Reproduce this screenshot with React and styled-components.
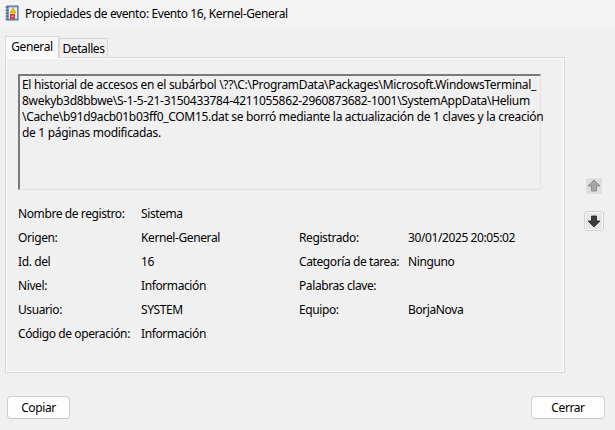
import React from 'react';
import styled, { createGlobalStyle } from 'styled-components';

const Global = createGlobalStyle`
    html, body {
        margin: 0;
        padding: 0;
        background: #f0f0f0;
    }
    body {
        font-family: 'Noto Sans', 'Liberation Sans', sans-serif;
        font-size: 12px;
        letter-spacing: -0.4px;
        color: #000;
    }
`

const Window = styled.div`
    width: 615px;
    height: 430px;
    display: flex;
    flex-direction: column;
    background: #f0f0f0;
    overflow: hidden;
`

const TitleBar = styled.div`
    height: 26px;
    padding: 0 0 0 5px;
    display: flex;
    align-items: center;
    gap: 6px;
    background: #f3f3f3;
`

const Title = styled.span`
    font-size: 12px;
    letter-spacing: -0.4px;
`

const Body = styled.div`
    display: flex;
    padding: 9px 0 0 5px;
    gap: 19px;
`

const Left = styled.div`
    display: flex;
    flex-direction: column;
    width: 560px;
`

const Tabs = styled.div`
    display: flex;
    align-items: flex-end;
    height: 22px;
`

const Tab = styled.div`
    height: ${p => p.active ? '22px' : '19px'};
    width: ${p => p.w}px;
    display: flex;
    align-items: center;
    justify-content: center;
    box-sizing: border-box;
    border: 1px solid #d9d9d9;
    border-bottom: none;
    background: ${p => p.active ? '#f9f9f9' : '#f0f0f0'};
    margin-bottom: ${p => p.active ? '-1px' : '0'};
    position: relative;
    z-index: ${p => p.active ? 1 : 0};
    ${p => p.active ? 'padding-bottom: 2px;' : ''}
`

const Panel = styled.div`
    height: 316px;
    box-sizing: border-box;
    border: 1px solid #dadada;
    padding: 16px 23px 0 12px;
    background: #f0f0f0;
    box-shadow: inset 1px 1px 0 #fbfbfb, inset -1px -1px 0 #fbfbfb;
`

const Message = styled.div`
    height: 116px;
    box-sizing: border-box;
    border-top: 2px solid #7a7a7a;
    border-left: 2px solid #7a7a7a;
    border-right: 1px solid #e3e3e3;
    border-bottom: 1px solid #e3e3e3;
    padding: 1px 2px;
    line-height: 16px;
    white-space: pre;
    letter-spacing: -0.31px;
`

const Fields = styled.div`
    display: grid;
    grid-template-columns: 123px 158px 109px 1fr;
    grid-auto-rows: 24px;
    align-items: center;
    padding: 11px 0 0 0;
`

const Cell = styled.div`
    grid-column: ${p => p.col};
    white-space: nowrap;
`

const Side = styled.div`
    display: flex;
    flex-direction: column;
    gap: 15px;
    padding-top: 141px;
`

const NavButton = styled.div`
    width: 20px;
    height: 20px;
    box-sizing: border-box;
    border-radius: 3px;
    border: 1px solid ${p => p.disabled ? '#efefef' : '#cfcfcf'};
    background: ${p => p.disabled ? '#f3f3f3' : '#fbfbfb'};
    display: flex;
    align-items: center;
    justify-content: center;
`

const Footer = styled.div`
    display: flex;
    justify-content: space-between;
    padding: 23px 10px 0 7px;
`

const Button = styled.div`
    width: ${p => p.w}px;
    height: 23px;
    box-sizing: border-box;
    border: 1px solid #d0d0d0;
    border-bottom-color: #c4c4c4;
    border-radius: 4px;
    background: #fdfdfd;
    display: flex;
    align-items: center;
    justify-content: center;
`

const LogIcon = () => (
    <svg width="14" height="16" viewBox="0 0 14 16">
        <rect x="2" y="1" width="11" height="14" fill="#8fa7c6" stroke="#4d6a93" />
        <rect x="4" y="2.5" width="8" height="11" fill="#e8eef6" />
        {[2, 5, 8, 11, 14].map(y => (
            <rect key={y} x="0.5" y={y - 0.5} width="3" height="1.4" fill="#5b6f8a" />
        ))}
        <path d="M8 2.5 L11 8 L5 8 Z" fill="#f2c200" stroke="#b58a00" strokeWidth="0.5" />
        <rect x="5" y="9" width="5" height="5" fill="#d2332f" />
        <rect x="6.5" y="10.5" width="2" height="2" fill="#f3b0ae" />
    </svg>
)

const Arrow = ({ up, color, bg }) => (
    <svg width="16" height="16" viewBox="0 0 16 16">
        <rect x="0" y="0" width="16" height="16" fill={bg} />
        <path
            d={up ? 'M8 2 L14 8 L10.5 8 L10.5 13 L5.5 13 L5.5 8 L2 8 Z' : 'M8 14 L14 8 L10.5 8 L10.5 3 L5.5 3 L5.5 8 L2 8 Z'}
            fill={color}
            stroke={color === '#3c3c3c' ? '#222' : '#808080'}
            strokeWidth="0.8"
            strokeLinejoin="round"
        />
    </svg>
)

const message = `El historial de accesos en el subárbol \\??\\C:\\ProgramData\\Packages\\Microsoft.WindowsTerminal_
8wekyb3d8bbwe\\S-1-5-21-3150433784-4211055862-2960873682-1001\\SystemAppData\\Helium
\\Cache\\b91d9acb01b03ff0_COM15.dat se borró mediante la actualización de 1 claves y la creación
de 1 páginas modificadas.`

const rows = [
    ['Nombre de registro:', 'Sistema'],
    ['Origen:', 'Kernel-General', 'Registrado:', '30/01/2025 20:05:02'],
    ['Id. del', '16', 'Categoría de tarea:', 'Ninguno'],
    ['Nivel:', 'Información', 'Palabras clave:', ''],
    ['Usuario:', 'SYSTEM', 'Equipo:', 'BorjaNova'],
    ['Código de operación:', 'Información'],
]

export default function App() {
    return (
        <Window>
            <Global />
            <TitleBar>
                <LogIcon />
                <Title>Propiedades de evento: Evento 16, Kernel-General</Title>
            </TitleBar>
            <Body>
                <Left>
                    <Tabs>
                        <Tab active w={54}>General</Tab>
                        <Tab w={49}>Detalles</Tab>
                    </Tabs>
                    <Panel>
                        <Message>{message}</Message>
                        <Fields>
                            {rows.map((r, i) =>
                                r.map((t, j) => (
                                    <Cell key={i + '-' + j} col={j + 1}>{t}</Cell>
                                ))
                            )}
                        </Fields>
                    </Panel>
                </Left>
                <Side>
                    <NavButton disabled>
                        <Arrow up color="#a6a6a6" bg="#dedede" />
                    </NavButton>
                    <NavButton>
                        <Arrow color="#3c3c3c" bg="#e6e6e6" />
                    </NavButton>
                </Side>
            </Body>
            <Footer>
                <Button w={63}>Copiar</Button>
                <Button w={74}>Cerrar</Button>
            </Footer>
        </Window>
    );
}
